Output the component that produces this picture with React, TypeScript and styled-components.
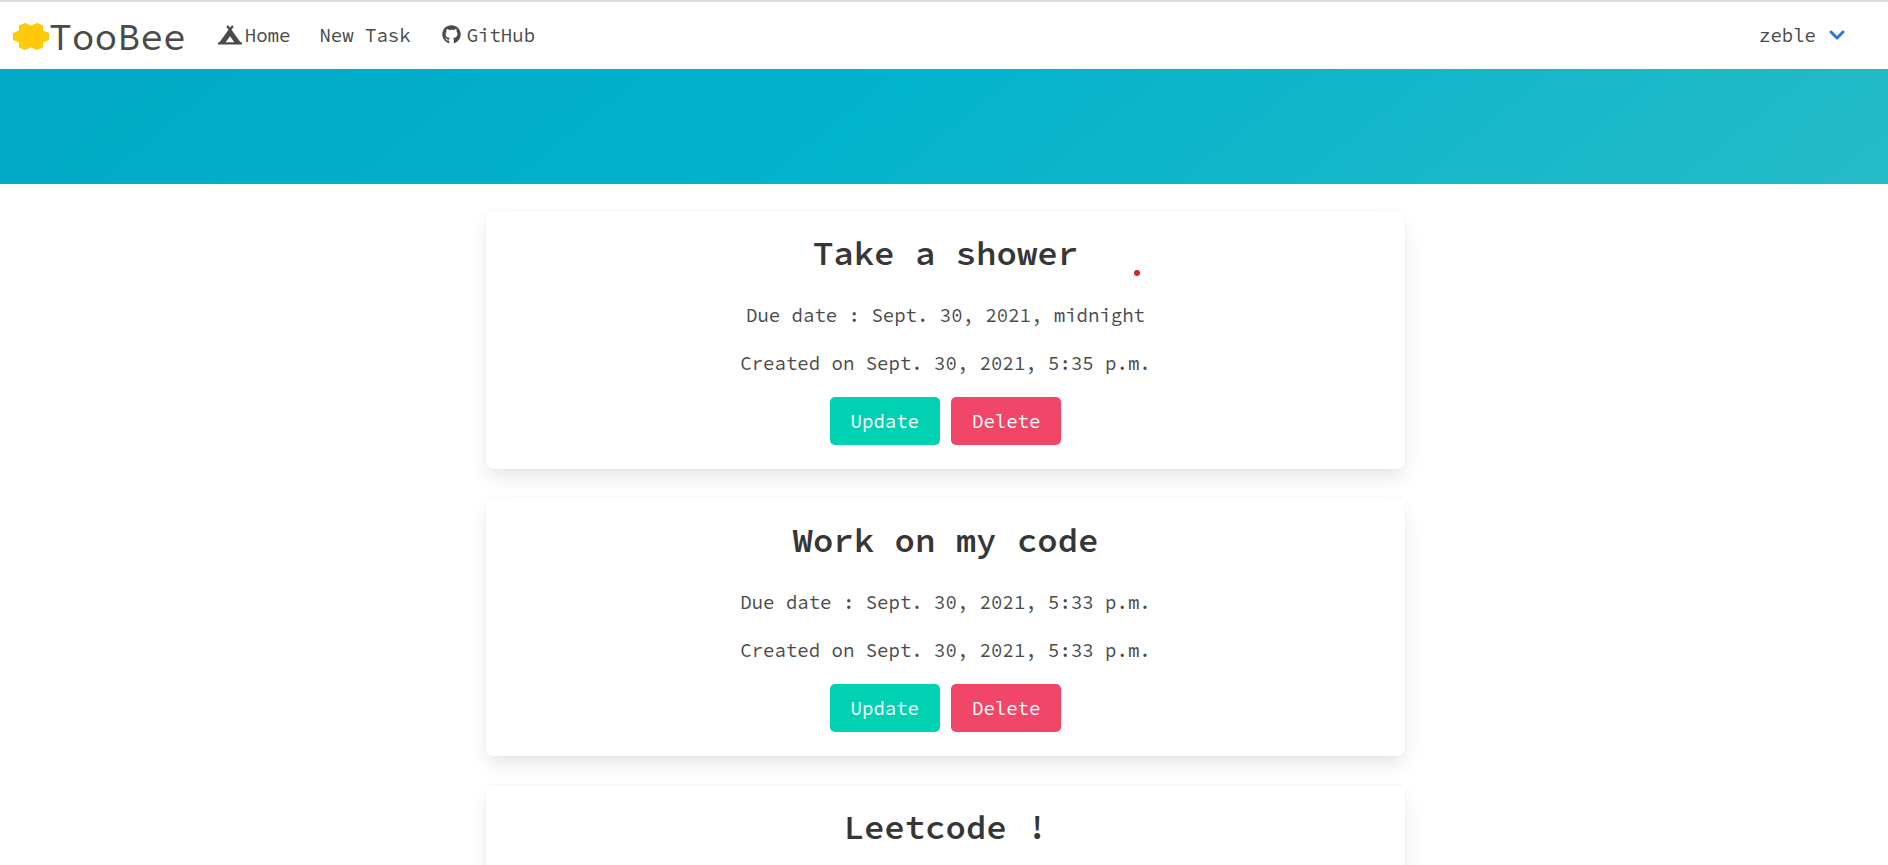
import React from 'react';
import styled, { createGlobalStyle } from 'styled-components';
import { FaCampground, FaGithub } from 'react-icons/fa';

const GlobalStyle = createGlobalStyle`
  *, *::before, *::after { box-sizing: border-box; }
  body {
    margin: 0;
    background: #fff;
    color: #4a4a4a;
    font-family: "Source Code Pro", "Liberation Mono", monospace;
    font-size: 19px;
    line-height: 28px;
  }
  h1, p { margin: 0; }
`;

const Navbar = styled.nav`
  display: flex;
  align-items: center;
  height: 69px;
  padding: 0 28px 0 13px;
  border-top: 2px solid #dbdbdb;
  background: #fff;
`;

const Brand = styled.a`
  display: flex;
  align-items: center;
  margin-right: 32px;
  padding-top: 2px;
  color: #4a4a4a;
  font-size: 38px;
  text-decoration: none;
`;

const Links = styled.div`
  display: flex;
  gap: 29px;
  padding-bottom: 2px;
`;

const NavLink = styled.a`
  display: flex;
  align-items: center;
  gap: 3px;
  color: #4a4a4a;
  text-decoration: none;
`;

const IconBox = styled.span`
  display: flex;
  align-items: center;
  justify-content: center;
  width: 24px;
  height: 24px;
`;

const UserMenu = styled.button`
  display: flex;
  align-items: center;
  gap: 13px;
  margin-left: auto;
  padding: 0 15px 2px;
  border: 0;
  background: none;
  color: #4a4a4a;
  font: inherit;
  cursor: pointer;
`;

const Banner = styled.header`
  height: 115px;
  background: linear-gradient(141deg, #00a9c5 0%, #02b3cd 45%, #26bbc7 100%);
`;

const TaskList = styled.main`
  display: flex;
  flex-direction: column;
  align-items: center;
  gap: 29px;
  padding: 27px 0 29px 3px;
`;

const Card = styled.article`
  position: relative;
  display: flex;
  flex-direction: column;
  align-items: center;
  width: calc(50% - 24px);
  min-height: 258px;
  padding: 24px;
  border-radius: 7px;
  background: #fff;
  box-shadow: 0 10px 19px -2px rgba(10, 10, 10, 0.1), 0 0 0 1px rgba(10, 10, 10, 0.02);
`;

const Title = styled.h1`
  margin-bottom: 30px;
  color: #363636;
  font-size: 34px;
  font-weight: 600;
  line-height: 36px;
`;

const Detail = styled.p`
  margin-bottom: 20px;
`;

const Actions = styled.div`
  display: flex;
  gap: 11px;
`;

const ActionButton = styled.button<{ $color: string }>`
  height: 48px;
  padding: 0 21px;
  border: 0;
  border-radius: 5px;
  background: ${({ $color }) => $color};
  color: #fff;
  font: inherit;
  cursor: pointer;
`;

const Marker = styled.span`
  position: absolute;
  top: 59px;
  left: 70.5%;
  width: 6px;
  height: 6px;
  border-radius: 50%;
  background: #d9202a;
`;

const cells = [[12, 6], [24, 6], [6, 13.5], [18, 13.5], [30, 13.5], [12, 21], [24, 21]];

const Honeycomb = () => (
  <svg width="36" height="27" viewBox="0 0 36 27" aria-hidden="true">
    {cells.map(([x, y]) => (
      <polygon
        key={`${x}-${y}`}
        points={`${x},${y - 5.5} ${x + 5.5},${y - 3.2} ${x + 5.5},${y + 3.2} ${x},${y + 5.5} ${x - 5.5},${y + 3.2} ${x - 5.5},${y - 3.2}`}
        fill="#ffcb0b"
        stroke="#ffc30a"
        strokeWidth="1"
        strokeLinejoin="round"
      />
    ))}
  </svg>
);

const Chevron = () => (
  <svg width="16" height="10" viewBox="0 0 16 10" fill="none" aria-hidden="true">
    <path d="M2 2l6 6 6-6" stroke="#3273dc" strokeWidth="3" strokeLinecap="round" strokeLinejoin="round" />
  </svg>
);

interface Task {
  title: string;
  due?: string;
  created?: string;
  marked?: boolean;
}

const tasks: Task[] = [
  { title: 'Take a shower', due: 'Sept. 30, 2021, midnight', created: 'Sept. 30, 2021, 5:35 p.m.', marked: true },
  { title: 'Work on my code', due: 'Sept. 30, 2021, 5:33 p.m.', created: 'Sept. 30, 2021, 5:33 p.m.' },
  { title: 'Leetcode !' },
];

export default function App() {
  return (
    <>
      <GlobalStyle />
      <Navbar>
        <Brand href="#"><Honeycomb />TooBee</Brand>
        <Links>
          <NavLink href="#"><IconBox><FaCampground size={24} /></IconBox>Home</NavLink>
          <NavLink href="#">New Task</NavLink>
          <NavLink href="#"><IconBox><FaGithub size={19} /></IconBox>GitHub</NavLink>
        </Links>
        <UserMenu type="button">zeble<Chevron /></UserMenu>
      </Navbar>
      <Banner />
      <TaskList>
        {tasks.map((task) => (
          <Card key={task.title}>
            <Title>{task.title}</Title>
            {task.due && <Detail>Due date : {task.due}</Detail>}
            {task.created && (
              <>
                <Detail>Created on {task.created}</Detail>
                <Actions>
                  <ActionButton type="button" $color="#00d1b2">Update</ActionButton>
                  <ActionButton type="button" $color="#f14668">Delete</ActionButton>
                </Actions>
              </>
            )}
            {task.marked && <Marker />}
          </Card>
        ))}
      </TaskList>
    </>
  );
}
